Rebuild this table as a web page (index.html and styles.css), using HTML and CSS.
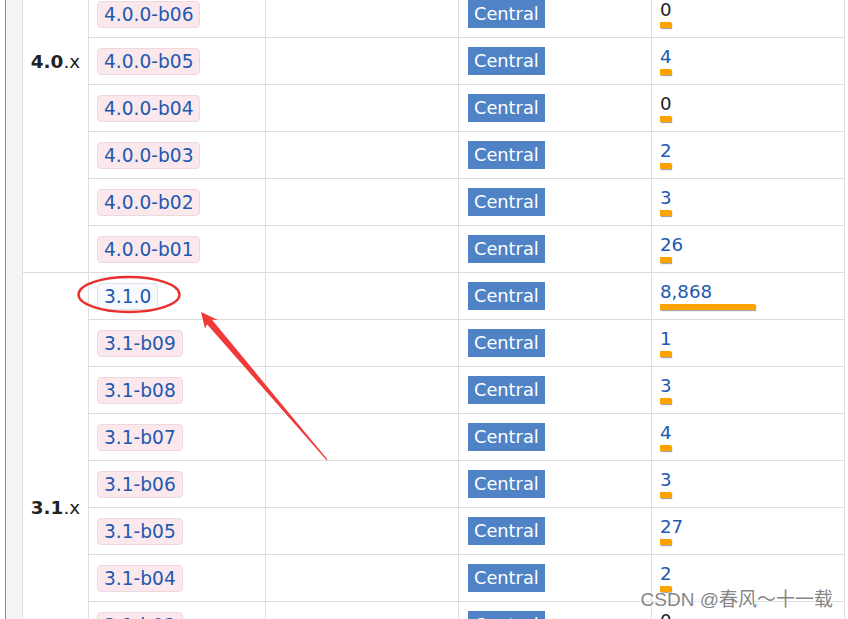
FILE: index.html
```html
<!DOCTYPE html>
<html>
<head>
<meta charset="utf-8">
<link rel="stylesheet" href="styles.css">
</head>
<body>
<div class="page">
  <div class="gutter"></div>
  <div class="viewport">
    <table class="versions">
      <colgroup>
        <col class="c-group"><col class="c-ver"><col class="c-empty"><col class="c-repo"><col class="c-usage">
      </colgroup>
      <tbody class="grp">
        <tr>
          <td class="label" rowspan="9"><b>4.0</b>.x</td>
          <td><a class="ver">4.0.0</a></td><td></td><td><span class="repo">Central</span></td>
          <td><span class="num">0</span><div class="bar"></div></td>
        </tr>
        <tr><td><a class="ver beta">4.0.0-b08</a></td><td></td><td><span class="repo">Central</span></td><td><span class="num">0</span><div class="bar"></div></td></tr>
        <tr><td><a class="ver beta">4.0.0-b07</a></td><td></td><td><span class="repo">Central</span></td><td><span class="num">0</span><div class="bar"></div></td></tr>
        <tr><td><a class="ver beta">4.0.0-b06</a></td><td></td><td><span class="repo">Central</span></td><td><span class="num">0</span><div class="bar"></div></td></tr>
        <tr><td><a class="ver beta">4.0.0-b05</a></td><td></td><td><span class="repo">Central</span></td><td><a class="num link">4</a><div class="bar"></div></td></tr>
        <tr><td><a class="ver beta">4.0.0-b04</a></td><td></td><td><span class="repo">Central</span></td><td><span class="num">0</span><div class="bar"></div></td></tr>
        <tr><td><a class="ver beta">4.0.0-b03</a></td><td></td><td><span class="repo">Central</span></td><td><a class="num link">2</a><div class="bar"></div></td></tr>
        <tr><td><a class="ver beta">4.0.0-b02</a></td><td></td><td><span class="repo">Central</span></td><td><a class="num link">3</a><div class="bar"></div></td></tr>
        <tr><td><a class="ver beta">4.0.0-b01</a></td><td></td><td><span class="repo">Central</span></td><td><a class="num link">26</a><div class="bar"></div></td></tr>
      </tbody>
      <tbody class="grp">
        <tr>
          <td class="label" rowspan="10"><b>3.1</b>.x</td>
          <td><a class="ver">3.1.0</a></td><td></td><td><span class="repo">Central</span></td>
          <td><a class="num link">8,868</a><div class="bar" style="width:95px"></div></td>
        </tr>
        <tr><td><a class="ver beta">3.1-b09</a></td><td></td><td><span class="repo">Central</span></td><td><a class="num link">1</a><div class="bar"></div></td></tr>
        <tr><td><a class="ver beta">3.1-b08</a></td><td></td><td><span class="repo">Central</span></td><td><a class="num link">3</a><div class="bar"></div></td></tr>
        <tr><td><a class="ver beta">3.1-b07</a></td><td></td><td><span class="repo">Central</span></td><td><a class="num link">4</a><div class="bar"></div></td></tr>
        <tr><td><a class="ver beta">3.1-b06</a></td><td></td><td><span class="repo">Central</span></td><td><a class="num link">3</a><div class="bar"></div></td></tr>
        <tr><td><a class="ver beta">3.1-b05</a></td><td></td><td><span class="repo">Central</span></td><td><a class="num link">27</a><div class="bar"></div></td></tr>
        <tr><td><a class="ver beta">3.1-b04</a></td><td></td><td><span class="repo">Central</span></td><td><a class="num link">2</a><div class="bar"></div></td></tr>
        <tr><td><a class="ver beta">3.1-b03</a></td><td></td><td><span class="repo">Central</span></td><td><span class="num">0</span><div class="bar"></div></td></tr>
        <tr><td><a class="ver beta">3.1-b02</a></td><td></td><td><span class="repo">Central</span></td><td><span class="num">0</span><div class="bar"></div></td></tr>
        <tr><td><a class="ver beta">3.1-b01</a></td><td></td><td><span class="repo">Central</span></td><td><span class="num">0</span><div class="bar"></div></td></tr>
      </tbody>
    </table>
  </div>
  <svg class="annot" width="848" height="619" viewBox="0 0 848 619">
    <ellipse cx="129" cy="294.5" rx="50.5" ry="17.5" fill="none" stroke="#e8302e" stroke-width="2.4"/>
    <polygon points="201,312 218,320 212,319.8 327.5,459.6 326.6,460.3 207,324.2 205,328.5" fill="#f03a3a"/>
  </svg>
  <div class="watermark">CSDN @春风～十一载</div>
</div>
</body>
</html>
```

FILE: styles.css
```css
html, body {
  margin: 0;
  padding: 0;
  background: #fff;
}

.page {
  position: relative;
  width: 848px;
  height: 619px;
  overflow: hidden;
  display: flex;
  font-family: "DejaVu Sans", Verdana, sans-serif;
  color: #222;
}

.gutter {
  flex: 0 0 16px;
  margin-left: 5px;
  border-left: 1px solid #8c8c8c;
  background: #f4f4f4;
}

.viewport {
  flex: 1 1 auto;
}

.versions {
  margin-top: -151px;
  border-collapse: collapse;
  table-layout: fixed;
  width: 823px;
}

.c-group { width: 66px; }
.c-ver { width: 177px; }
.c-empty { width: 193px; }
.c-repo { width: 193px; }
.c-usage { width: 193px; }

.versions td {
  height: 47px;
  padding: 0 0 0 8px;
  border: 1px solid #dedede;
  vertical-align: middle;
  box-sizing: border-box;
  font-size: 18px;
}

.versions td.label {
  padding: 0;
  text-align: center;
  font-size: 18.4px;
  color: #222;
}

.label b {
  font-weight: bold;
}

.ver {
  display: inline-block;
  padding: 2px 6px;
  line-height: 21px;
  border: 1px solid #e4dfe6;
  border-radius: 4px;
  background: #f8f9fc;
  color: #2159b0;
  font-size: 18.6px;
}

.ver.beta {
  background: #fbe8ec;
  border-color: #efd8dd;
}

.repo {
  display: inline-block;
  margin-left: 1px;
  padding: 3px 6px;
  line-height: 22px;
  background: #5083c6;
  color: #fff;
  font-size: 17.8px;
}

.num {
  display: block;
  line-height: 20px;
  font-size: 18.2px;
  color: #222;
}

.num.link {
  color: #2159b0;
}

.bar {
  width: 11px;
  height: 6px;
  margin-top: 2px;
  background: #fba400;
  box-shadow: 1px 1px 1px #a8a8a8;
}

.annot {
  position: absolute;
  left: 0;
  top: 0;
  pointer-events: none;
}

.watermark {
  position: absolute;
  right: 15px;
  bottom: 8px;
  font-family: "Liberation Sans", "Noto Sans CJK SC", sans-serif;
  font-size: 19px;
  color: rgba(110, 110, 110, 0.85);
  text-shadow: 0 0 2px #fff, 0 0 2px #fff;
  white-space: nowrap;
}
```
